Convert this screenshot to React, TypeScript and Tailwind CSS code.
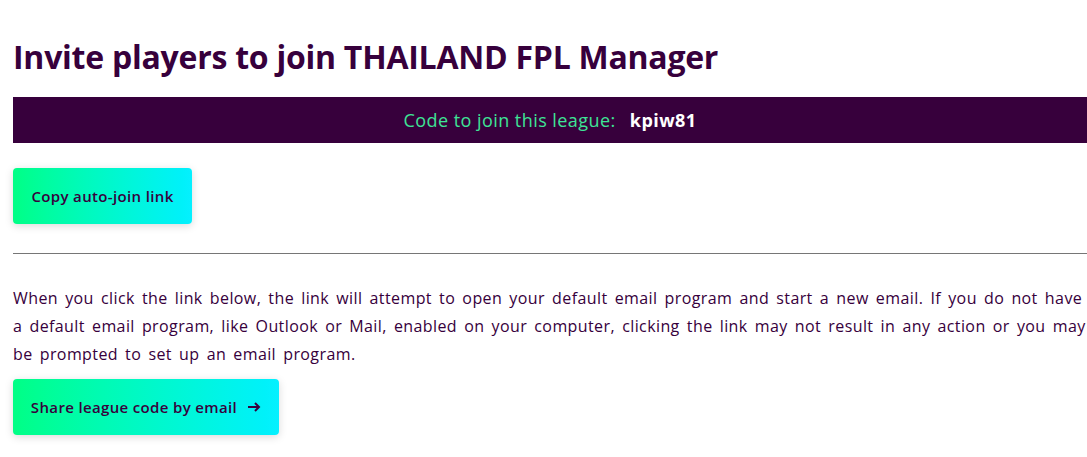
export default function App() {
  const font = { fontFamily: '"Open Sans", "Liberation Sans", sans-serif' };

  return (
    <div className="min-h-screen bg-white pl-[13px] pt-[37px] text-[#37003c]" style={font}>
      <h1 className="text-[32px] leading-[40px] font-bold tracking-[-0.25px]">
        Invite players to join THAILAND FPL Manager
      </h1>

      <div className="mt-[20px] flex h-[46px] items-center justify-center bg-[#37003c] text-[18px] tracking-[0.45px]">
        <span className="text-[#3ee496]">Code to join this league:</span>
        <span className="ml-[14px] font-bold text-white">kpiw81</span>
      </div>

      <button className="mt-[25px] flex h-[56px] w-[179px] items-center justify-center rounded-[4px] bg-gradient-to-r from-[#00ff85] to-[#05f0ff] text-[15px] font-semibold tracking-[0.35px] text-[#37003c] shadow-[0_2px_8px_rgba(0,0,0,0.15)]">
        Copy auto-join link
      </button>

      <hr className="mt-[29px] border-t border-[#767676]" />

      <p className="mt-[30px] text-[16px] leading-[28px] tracking-[0.4px] [word-spacing:2.6px]">
        When you click the link below, the link will attempt to open your default email program and
        start a new email. If you do not have a default email program, like Outlook or Mail, enabled
        on your computer, clicking the link may not result in any action or you may be prompted to
        set up an email program.
      </p>

      <button className="mt-[11px] flex h-[56px] w-[266px] items-center justify-center gap-[10px] rounded-[4px] bg-gradient-to-r from-[#00ff85] to-[#05f0ff] text-[15px] font-semibold tracking-[0.35px] text-[#37003c] shadow-[0_2px_8px_rgba(0,0,0,0.15)]">
        <span>Share league code by email</span>
        <svg width="14" height="10" viewBox="0 0 14 10" fill="none">
          <path d="M1 5h11M8 1l4 4-4 4" stroke="#37003c" strokeWidth="2" />
        </svg>
      </button>
    </div>
  );
}
